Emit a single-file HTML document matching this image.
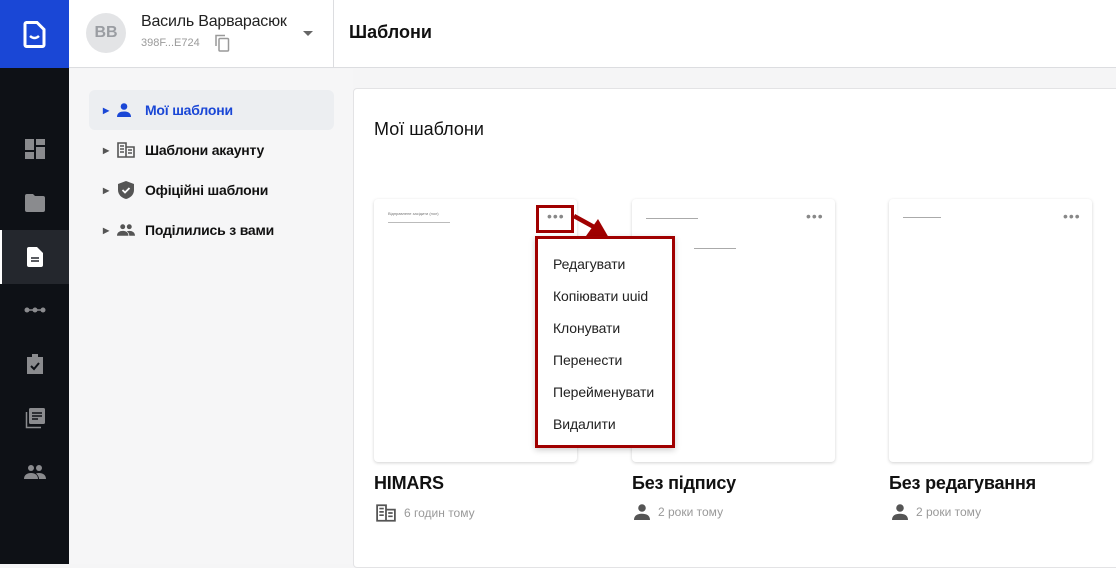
<!DOCTYPE html>
<html><head><meta charset="utf-8"><style>
*{box-sizing:border-box;margin:0;padding:0}
body{width:1116px;height:564px;overflow:hidden;font-family:"Liberation Sans",Roboto,sans-serif;background:#f5f5f6;position:relative;color:#111}
.abs{position:absolute}
.side{left:0;top:0;width:69px;height:564px;background:#0e1116}
.logo{left:0;top:0;width:69px;height:68px;background:#1a47d6}
.hdr{left:69px;top:0;width:1047px;height:68px;background:#fff;border-bottom:1px solid #dcdde0}
.ico{fill:#8a8b8e}
.nav{left:89px;height:40px;width:245px;font-size:14px;font-weight:bold;display:flex;align-items:center;letter-spacing:-0.2px}
.card{background:#fff;border-radius:4px;box-shadow:0 1px 3px rgba(0,0,0,.18);width:203px;height:263px;top:199px}
.dots{font-size:14px;color:#888;letter-spacing:1px}
.ttl{font-size:18px;font-weight:bold;top:473px;letter-spacing:-0.2px}
.meta{font-size:12px;color:#999;top:504px;display:flex;align-items:center;gap:8px}
.mi{position:absolute;left:15px;font-size:14px;color:#222;letter-spacing:-0.1px}
</style></head><body>
<div class="abs side"></div>
<div class="abs logo"><svg class="abs" style="left:23px;top:21px" width="23" height="27" viewBox="0 0 23 27"><path d="M3 1.5h11l7 7V24a1.5 1.5 0 0 1-1.5 1.5h-16A1.5 1.5 0 0 1 2 24V3A1.5 1.5 0 0 1 3.5 1.5z" fill="none" stroke="#fff" stroke-width="3"/><path d="M7 15q4.5 4 9 0" fill="none" stroke="#fff" stroke-width="2.5"/></svg></div>
<svg class="abs" style="left:25px;top:139px" width="20" height="20" viewBox="0 0 20 20"><path class="ico" d="M0 0h9v11H0zM11 0h9v6h-9zM11 8h9v12h-9zM0 13h9v7H0z"/></svg>
<svg class="abs" style="left:25px;top:194px" width="20" height="18" viewBox="0 0 20 18"><path class="ico" d="M0 2a2 2 0 0 1 2-2h6l2 2h8a2 2 0 0 1 2 2v12a2 2 0 0 1-2 2H2a2 2 0 0 1-2-2z"/></svg>
<div class="abs" style="left:0;top:230px;width:69px;height:54px;background:#24272d;border-left:2px solid #fff"></div>
<svg class="abs" style="left:27px;top:247px" width="16" height="20" viewBox="0 0 16 20"><path fill="#fff" d="M2 0h8l6 6v12a2 2 0 0 1-2 2H2a2 2 0 0 1-2-2V2a2 2 0 0 1 2-2z"/><path d="M4 11h8M4 14h8" stroke="#24272d" stroke-width="1.6"/></svg>
<svg class="abs" style="left:24px;top:306px" width="22" height="8" viewBox="0 0 22 8"><circle cx="3" cy="4" r="2.5" class="ico"/><circle cx="11" cy="4" r="2.5" class="ico"/><circle cx="19" cy="4" r="2.5" class="ico"/><path d="M3 4h16" stroke="#8a8b8e" stroke-width="1.5"/></svg>
<svg class="abs" style="left:26px;top:354px" width="18" height="21" viewBox="0 0 18 21"><path class="ico" d="M1 3h16v17H1zM6 0h6v5H6z"/><path d="M5 12l3 3 5-6" stroke="#0e1116" stroke-width="2" fill="none"/></svg>
<svg class="abs" style="left:25px;top:408px" width="20" height="21" viewBox="0 0 20 21"><path d="M1.5 4v15.5H16" stroke="#8a8b8e" stroke-width="1.5" fill="none"/><rect x="4" y="0" width="16" height="16" rx="1.5" class="ico"/><path d="M7 5h10M7 8h10M7 11h6" stroke="#0e1116" stroke-width="1.6"/></svg>
<svg class="abs" style="left:24px;top:465px" width="22" height="14" viewBox="0 0 22 14"><circle cx="7" cy="3" r="3" class="ico"/><circle cx="15" cy="3" r="3" class="ico"/><path class="ico" d="M0 14c0-4 3-6 7-6s7 2 7 6zM12 8.5c1-.4 2-.5 3-.5 4 0 7 2 7 6h-7c0-2-1-4-3-5.5z"/></svg>
<div class="abs hdr"></div>
<div class="abs" style="left:86px;top:13px;width:40px;height:40px;border-radius:50%;background:#e3e4e6;color:#9a9da2;font-weight:bold;font-size:16px;text-align:center;line-height:40px">BB</div>
<div class="abs" style="left:141px;top:13px;font-size:16px;color:#222;letter-spacing:-0.2px">Василь Варварасюк</div>
<div class="abs" style="left:141px;top:37px;font-size:11px;color:#9a9a9a">398F...E724</div>
<svg class="abs" style="left:214px;top:34px" width="16" height="18" viewBox="0 0 16 18"><path d="M2 12V1.5h9" stroke="#999" stroke-width="1.5" fill="none"/><rect x="5" y="4.5" width="9.5" height="12.5" rx="1" stroke="#999" stroke-width="1.5" fill="none"/></svg>
<div class="abs" style="left:303px;top:31px;border:5px solid transparent;border-top-color:#666;border-bottom:0"></div>
<div class="abs" style="left:333px;top:0;width:1px;height:68px;background:#dcdde0"></div>
<div class="abs" style="left:349px;top:22px;font-size:18px;font-weight:bold;color:#111">Шаблони</div>
<div class="abs" style="left:69px;top:69px;width:284px;height:495px;background:#f6f6f7"></div>
<div class="abs nav" style="top:90px;background:#eceef1;border-radius:6px;color:#1a47d6"><span style="margin-left:14px;font-size:8px;color:#1a47d6">▶</span><svg style="margin-left:8px" width="14" height="14" viewBox="0 0 14 14"><circle cx="7" cy="3.5" r="3.3" fill="#1a47d6"/><path d="M0 14c0-4 3-5.5 7-5.5s7 1.5 7 5.5z" fill="#1a47d6"/></svg><span style="margin-left:14px">Мої шаблони</span></div>
<div class="abs nav" style="top:130px"><span style="margin-left:14px;font-size:8px;color:#555">▶</span><svg style="margin-left:8px" width="18" height="16" viewBox="0 0 18 16"><path d="M1 1h8v14H1zM9 5h8v10H9z" fill="none" stroke="#555" stroke-width="1.6"/><path d="M3 4h4M3 7h4M3 10h4M11 8h4M11 11h4" stroke="#555" stroke-width="1.5"/></svg><span style="margin-left:10px">Шаблони акаунту</span></div>
<div class="abs nav" style="top:170px"><span style="margin-left:14px;font-size:8px;color:#555">▶</span><svg style="margin-left:9px" width="16" height="18" viewBox="0 0 16 18"><path d="M8 0l8 3v6c0 4.5-3.5 8-8 9-4.5-1-8-4.5-8-9V3z" fill="#555"/><path d="M4.5 9l2.5 2.5 4.5-4.5" stroke="#fff" stroke-width="1.8" fill="none"/></svg><span style="margin-left:11px">Офіційні шаблони</span></div>
<div class="abs nav" style="top:210px"><span style="margin-left:14px;font-size:8px;color:#555">▶</span><svg style="margin-left:8px" width="18" height="12" viewBox="0 0 22 14"><circle cx="7" cy="3" r="3" fill="#555"/><circle cx="15" cy="3" r="3" fill="#555"/><path fill="#555" d="M0 14c0-4 3-6 7-6s7 2 7 6zM12 8.5c1-.4 2-.5 3-.5 4 0 7 2 7 6h-7c0-2-1-4-3-5.5z"/></svg><span style="margin-left:10px">Поділились з вами</span></div>
<div class="abs" style="left:353px;top:88px;width:770px;height:480px;background:#fff;border:1px solid #e3e3e5;border-radius:4px"></div>
<div class="abs" style="left:374px;top:119px;font-size:18px;color:#111">Мої шаблони</div>
<div class="abs card" style="left:374px"><div class="abs" style="left:14px;top:12px;font-size:4px;color:#777">Відправлене засідити (пол)</div><div class="abs" style="left:14px;top:23px;width:62px;height:1px;background:#bbb"></div></div>
<div class="abs card" style="left:632px"><div class="abs" style="left:14px;top:19px;width:52px;height:1px;background:#aaa"></div><div class="abs" style="left:17px;top:38px;font-size:4px;color:#888">про ремни</div><div class="abs" style="left:62px;top:49px;width:42px;height:1px;background:#aaa"></div><div class="abs dots" style="left:174px;top:9px">•••</div></div>
<div class="abs card" style="left:889px"><div class="abs" style="left:14px;top:18px;width:38px;height:1px;background:#aaa"></div><div class="abs dots" style="left:174px;top:9px">•••</div></div>
<div class="abs dots" style="left:547px;top:208px">•••</div>
<div class="abs" style="left:536px;top:205px;width:38px;height:28px;border:3px solid #a00000"></div>
<svg class="abs" style="left:572px;top:210px" width="45" height="32" viewBox="0 0 45 32"><path d="M2 6l20 11" stroke="#a00000" stroke-width="4.5"/><path d="M14 26l23 2-11-19z" fill="#a00000"/></svg>
<div class="abs" style="left:535px;top:236px;width:140px;height:212px;border:3px solid #a00000;background:#fff;box-shadow:0 2px 6px rgba(0,0,0,.2)">
<div class="mi" style="top:17px">Редагувати</div><div class="mi" style="top:49px">Копіювати uuid</div><div class="mi" style="top:81px">Клонувати</div><div class="mi" style="top:113px">Перенести</div><div class="mi" style="top:145px">Перейменувати</div><div class="mi" style="top:177px">Видалити</div></div>
<div class="abs ttl" style="left:374px">HIMARS</div>
<div class="abs ttl" style="left:632px">Без підпису</div>
<div class="abs ttl" style="left:889px">Без редагування</div>
<div class="abs meta" style="left:376px"><svg width="20" height="18" viewBox="0 0 18 16"><path d="M1 1h8v14H1zM9 5h8v10H9z" fill="none" stroke="#555" stroke-width="1.6"/><path d="M3 4h4M3 7h4M3 10h4M11 8h4M11 11h4" stroke="#555" stroke-width="1.5"/></svg>6 годин тому</div>
<div class="abs meta" style="left:634px"><svg width="16" height="16" viewBox="0 0 14 14"><circle cx="7" cy="3.5" r="3.3" fill="#555"/><path d="M0 14c0-4 3-5.5 7-5.5s7 1.5 7 5.5z" fill="#555"/></svg>2 роки тому</div>
<div class="abs meta" style="left:892px"><svg width="16" height="16" viewBox="0 0 14 14"><circle cx="7" cy="3.5" r="3.3" fill="#555"/><path d="M0 14c0-4 3-5.5 7-5.5s7 1.5 7 5.5z" fill="#555"/></svg>2 роки тому</div>
</body></html>
